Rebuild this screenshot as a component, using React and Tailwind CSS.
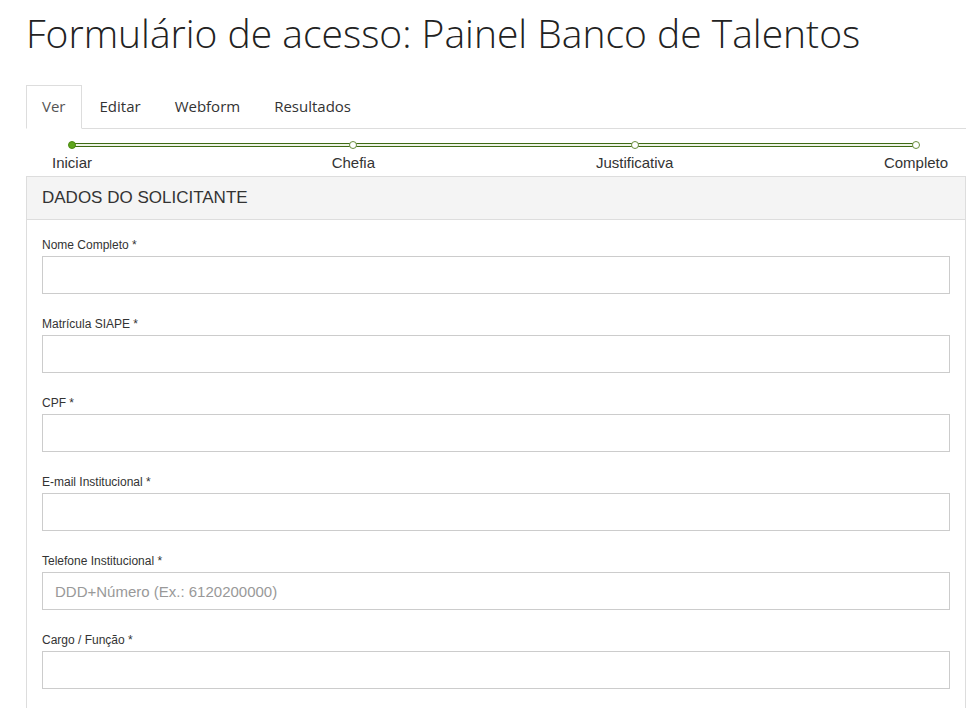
const steps = [
  { label: "Iniciar", done: true },
  { label: "Chefia" },
  { label: "Justificativa" },
  { label: "Completo" },
];

const fields = [
  { label: "Nome Completo" },
  { label: "Matrícula SIAPE" },
  { label: "CPF" },
  { label: "E-mail Institucional" },
  { label: "Telefone Institucional", placeholder: "DDD+Número (Ex.: 6120200000)" },
  { label: "Cargo / Função" },
];

const tabs = ["Ver", "Editar", "Webform", "Resultados"];

function Progress() {
  return (
    <div className="relative ml-[46px] mr-[50px] h-[35px]">
      <div className="absolute left-0 right-0 top-[2px] h-[4px] border-y border-[#3f6b14] bg-[#eef3e6]" />
      <div className="relative flex justify-between">
        {steps.map((s) => (
          <div key={s.label} className="w-0 flex flex-col items-center">
            <div
              className={
                s.done
                  ? "w-[8px] h-[8px] rounded-full bg-[#5ea51b] border border-[#4c8912]"
                  : "w-[8px] h-[8px] rounded-full bg-white border border-[#6b8e3d]"
              }
            />
            <span className="mt-[4px] whitespace-nowrap text-[15px] leading-[20px] text-[#333]">
              {s.label}
            </span>
          </div>
        ))}
      </div>
    </div>
  );
}

export default function App() {
  return (
    <div
      className="h-[708px] overflow-hidden bg-white pl-[26px] pr-[9px] text-[#333]"
      style={{ fontFamily: '"Liberation Sans", Arial, sans-serif' }}
    >
      <h1 className="pt-[11px] text-[39px] leading-[43px] font-light text-[#222] font-['Open_Sans',sans-serif] whitespace-nowrap">
        Formulário de acesso: Painel Banco de Talentos
      </h1>

      <ul className="mt-[31px] flex border-b border-[#ddd] font-['Open_Sans',sans-serif] text-[15px]">
        {tabs.map((t, i) => (
          <li
            key={t}
            className={
              i === 0
                ? "-mb-px mr-[2px] border border-[#ddd] border-b-white bg-white px-[15px] pt-[9px] pb-[11px] leading-[22px] text-[#555]"
                : "-mb-px mr-[2px] border border-transparent px-[15px] pt-[9px] pb-[11px] leading-[22px] text-[#333]"
            }
          >
            {t}
          </li>
        ))}
      </ul>

      <div className="pt-[12px]">
        <Progress />
      </div>

      <div className="border border-[#ddd]">
        <div className="border-b border-[#ddd] bg-[#f4f4f4] px-[15px] py-[10px] text-[17px] leading-[22px] text-[#333]">
          DADOS DO SOLICITANTE
        </div>
        <div className="px-[15px] pt-[17px]">
          {fields.map((f) => (
            <div key={f.label} className="mb-[22px]">
              <label className="mb-[2px] block text-[12px] leading-[17px] text-[#333]">
                {f.label} *
              </label>
              <input
                type="text"
                placeholder={f.placeholder}
                className="block h-[38px] w-full border border-[#ccc] px-[12px] text-[15px] text-[#555] placeholder:text-[#999] outline-none"
              />
            </div>
          ))}
        </div>
      </div>
    </div>
  );
}
